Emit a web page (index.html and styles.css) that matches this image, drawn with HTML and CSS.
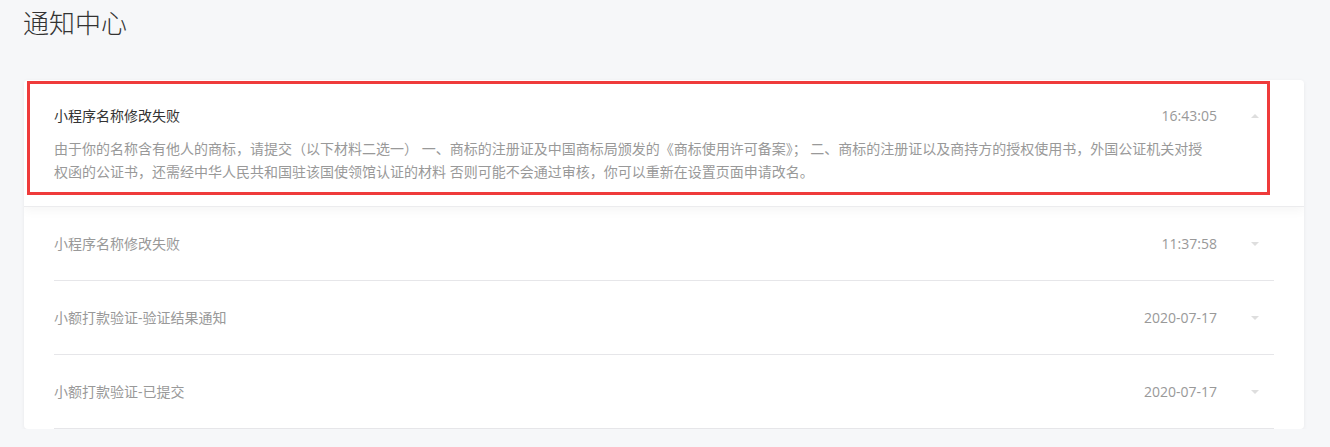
FILE: index.html
```html
<!DOCTYPE html>
<html lang="zh-CN">
<head>
<meta charset="utf-8">
<title>通知中心</title>
<link rel="stylesheet" href="styles.css">
</head>
<body>
<div class="page">
  <h1 class="page-title">通知中心</h1>
  <div class="card">
    <div class="item item-open">
      <div class="item-head">
        <div class="item-title">小程序名称修改失败</div>
        <div class="item-time">16:43:05</div>
        <span class="caret caret-up"></span>
      </div>
      <div class="item-body">由于你的名称含有他人的商标，请提交（以下材料二选一） 一、商标的注册证及中国商标局颁发的《商标使用许可备案》； 二、商标的注册证以及商持方的授权使用书，外国公证机关对授<br>权函的公证书，还需经中华人民共和国驻该国使领馆认证的材料 否则可能不会通过审核，你可以重新在设置页面申请改名。</div>
      <div class="highlight"></div>
    </div>
    <div class="item">
      <div class="item-head">
        <div class="item-title">小程序名称修改失败</div>
        <div class="item-time">11:37:58</div>
        <span class="caret caret-down"></span>
      </div>
    </div>
    <div class="item">
      <div class="item-head">
        <div class="item-title">小额打款验证-验证结果通知</div>
        <div class="item-time">2020-07-17</div>
        <span class="caret caret-down"></span>
      </div>
    </div>
    <div class="item">
      <div class="item-head">
        <div class="item-title">小额打款验证-已提交</div>
        <div class="item-time">2020-07-17</div>
        <span class="caret caret-down"></span>
      </div>
    </div>
  </div>
</div>
</body>
</html>
```

FILE: styles.css
```css
* { box-sizing: border-box; }
html, body {
  margin: 0;
  padding: 0;
  background: #f6f7f9;
  font-family: "Open Sans", "Noto Sans CJK SC", sans-serif;
}
.page {
  padding: 4px 26px 0 24px;
}
.page-title {
  margin: 0 0 40px -1px;
  font-family: "Noto Sans CJK SC", sans-serif;
  font-size: 26px;
  line-height: 36px;
  font-weight: 300;
  color: #333;
}
.card {
  background: #fff;
  border-radius: 4px;
  box-shadow: 0 1px 4px rgba(0, 0, 0, 0.06);
  overflow: hidden;
}
.item {
  margin: 0 30px;
  border-bottom: 1px solid #e6e6e9;
}
.item-head {
  display: flex;
  align-items: center;
  padding: 25px 0 24px;
  font-size: 14px;
  line-height: 24px;
}
.item-title {
  flex: 1;
  color: #999;
}
.item-time {
  color: #999;
}
.caret {
  width: 0;
  height: 0;
  margin: 0 15px 0 34px;
  border-left: 4px solid transparent;
  border-right: 4px solid transparent;
}
.caret-down { border-top: 4px solid #dedede; }
.caret-up { border-bottom: 4px solid #dedede; }

.item-open {
  position: relative;
  z-index: 1;
  margin: 0;
  padding: 0 30px 23px;
  border-bottom: 1px solid #ececee;
  box-shadow: 0 4px 10px rgba(0, 0, 0, 0.04);
}
.item-open .item-head {
  padding: 24px 0 0;
}
.item-open .item-title {
  color: #333;
}
.item-body {
  margin-top: 9px;
  font-size: 14px;
  line-height: 23px;
  color: #999;
}
.highlight {
  position: absolute;
  left: 3px;
  top: 1px;
  width: 1243px;
  height: 114px;
  border: 3px solid #ef3b3b;
  pointer-events: none;
}
```
